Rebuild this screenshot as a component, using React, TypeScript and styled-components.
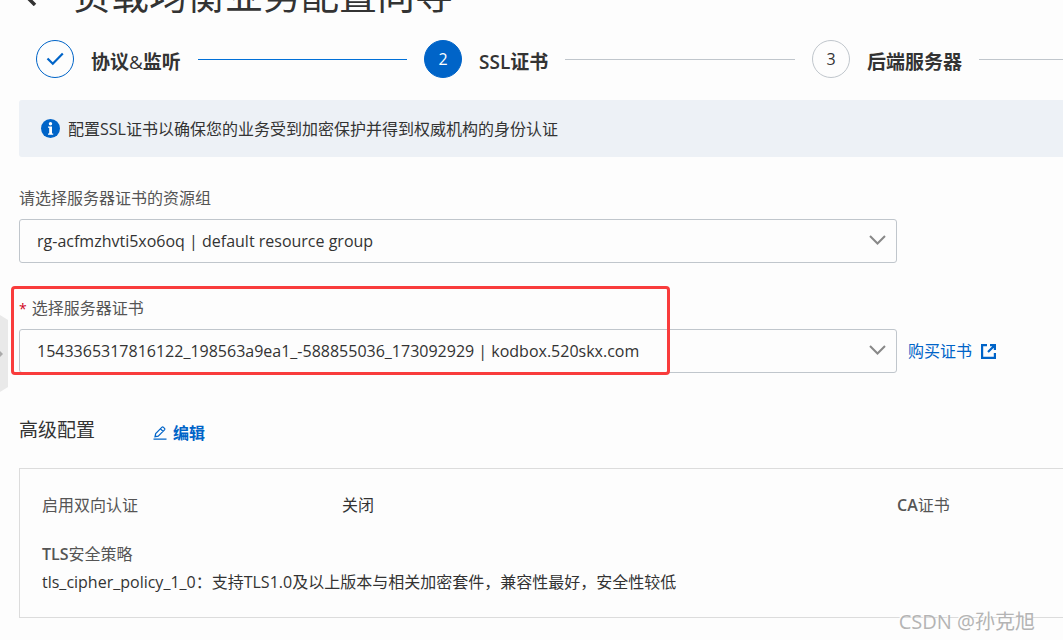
import React from 'react';
import styled, { createGlobalStyle } from 'styled-components';

const GlobalStyle = createGlobalStyle`
  *, *::before, *::after { box-sizing: border-box; }
  body {
    margin: 0;
    background: #fdfdfd;
    color: #333;
    font: 16px/24px "Open Sans", "Noto Sans CJK SC", sans-serif;
  }
  h1, h2, p, dl, dd, ol { margin: 0; padding: 0; }
`;

const Page = styled.main`
  position: relative;
  min-height: 100vh;
  overflow: hidden;
`;

const Header = styled.header`
  display: flex;
  align-items: flex-end;
  gap: 35px;
  height: 20px;
  padding-left: 20px;
`;

const BackButton = styled.button`
  display: flex;
  padding: 0 0 14px;
  border: 0;
  background: none;
  color: #333;
`;

const Title = styled.h1`
  font-size: 38px;
  font-weight: 400;
  line-height: 52px;
  white-space: nowrap;
`;

const Steps = styled.ol`
  display: grid;
  grid-template-columns: 371fr 371fr 251fr;
  column-gap: 17px;
  padding: 20px 0 22px 36px;
  list-style: none;
`;

const StepItem = styled.li`
  display: flex;
  align-items: center;
  gap: 17px;
  min-width: 0;
`;

type StepState = 'done' | 'active' | 'todo';

const StepMark = styled.span<{ $state: StepState }>`
  display: flex;
  flex: none;
  align-items: center;
  justify-content: center;
  width: 38px;
  height: 38px;
  border: 1px solid ${({ $state }) => ($state === 'todo' ? '#c0c6cc' : '#0064c8')};
  border-radius: 50%;
  background: ${({ $state }) => ($state === 'active' ? '#0064c8' : 'transparent')};
  color: ${({ $state }) => ($state === 'active' ? '#fff' : '#333')};
`;

const StepLabel = styled.span`
  padding-top: 6px;
  font-size: 19px;
  font-weight: 700;
  white-space: nowrap;
`;

const Latin = styled.span<{ $weight: number }>`
  font-weight: ${({ $weight }) => $weight};
`;

const StepLine = styled.span<{ $state: StepState }>`
  flex: 1;
  height: 1px;
  background: ${({ $state }) => ($state === 'done' ? '#0070d8' : '#c0c6cc')};
`;

const Content = styled.div`
  padding-left: 19px;
`;

const Notice = styled.p`
  display: flex;
  align-items: center;
  gap: 8px;
  height: 57px;
  padding-left: 22px;
  border-radius: 3px 0 0 3px;
  background: #edf1f6;
`;

const Form = styled.form`
  display: grid;
  grid-template-columns: 878fr 166fr;
  row-gap: 33px;
  align-items: end;
  padding-top: 29px;
`;

const Field = styled.div`
  position: relative;
  grid-column: 1;
`;

const FieldLabel = styled.label`
  display: block;
  height: 33px;
  color: #555;
`;

const Required = styled.span`
  margin-right: 5px;
  color: #d0021b;
  font-size: 14px;
`;

const SelectBox = styled.div`
  position: relative;
`;

const Select = styled.select`
  display: block;
  width: 100%;
  height: 44px;
  padding: 0 40px 0 17px;
  appearance: none;
  border: 1px solid #c0c6cc;
  border-radius: 3px;
  background: transparent;
  color: #333;
  font: inherit;
`;

const Chevron = styled.svg`
  position: absolute;
  top: 15px;
  right: 11px;
  pointer-events: none;
`;

const Highlight = styled.div`
  position: absolute;
  top: -10px;
  bottom: -2px;
  left: -8px;
  width: 75%;
  border: 3px solid #f93c3c;
  border-radius: 4px;
  pointer-events: none;
`;

const BuyLink = styled.a`
  display: flex;
  align-items: center;
  gap: 8px;
  height: 44px;
  padding-left: 11px;
  color: #0064c8;
  text-decoration: none;
`;

const SectionHead = styled.div`
  display: flex;
  align-items: center;
  gap: 58px;
  padding-top: 42px;
`;

const SectionTitle = styled.h2`
  font-size: 19px;
  font-weight: 400;
  line-height: 28px;
`;

const EditButton = styled.button`
  display: flex;
  align-items: center;
  gap: 6px;
  padding: 6px 0 0;
  border: 0;
  background: none;
  color: #0064c8;
  font: inherit;
  font-weight: 700;
`;

const Panel = styled.dl`
  display: grid;
  grid-template-columns: 300fr 555fr 166fr;
  margin-top: 23px;
  padding: 24px 0 23px 22px;
  border: 1px solid #dcdcdc;
  border-right: 0;
`;

const Term = styled.dt`
  color: #555;
`;

const Policy = styled.div`
  grid-column: 1 / -1;
  padding-top: 25px;
`;

const PolicyValue = styled.dd`
  padding-top: 4px;
`;

const Handle = styled.button`
  position: absolute;
  top: 315px;
  left: 0;
  display: flex;
  align-items: center;
  width: 8px;
  height: 77px;
  padding: 0;
  border: 0;
  background: #e9e9e9;
  clip-path: polygon(0 0, 100% 5px, 100% 72px, 0 100%);
`;

const Watermark = styled.div`
  position: absolute;
  right: 28px;
  bottom: 4px;
  color: #b4b4b4;
  font-size: 20px;
  line-height: 28px;
  text-shadow: -1px -1px 0 #fff;
`;

const ChevronIcon = () => (
  <Chevron width="17" height="12" viewBox="0 0 17 12" fill="none" stroke="#888" strokeWidth="2" aria-hidden="true">
    <path d="M1 2l7.500 7.500L16 2" />
  </Chevron>
);

export default function App() {
  return (
    <>
      <GlobalStyle />
      <Page>
        <Header>
          <BackButton type="button" aria-label="返回">
            <svg width="18" height="26" viewBox="0 0 18 26" fill="none" stroke="currentColor" strokeWidth="3.500">
              <path d="M15 1L3 13l12 12" />
            </svg>
          </BackButton>
          <Title>负载均衡业务配置向导</Title>
        </Header>

        <Steps>
          <StepItem>
            <StepMark $state="done">
              <svg width="18" height="14" viewBox="0 0 18 14" fill="none" stroke="#0064c8" strokeWidth="2.200" aria-label="完成">
                <path d="M1.500 6.500l5.300 5.300L16.800 1.500" />
              </svg>
            </StepMark>
            <StepLabel>协议<Latin $weight={400}>&amp;</Latin>监听</StepLabel>
            <StepLine $state="done" />
          </StepItem>
          <StepItem aria-current="step">
            <StepMark $state="active">2</StepMark>
            <StepLabel><Latin $weight={600}>SSL</Latin>证书</StepLabel>
            <StepLine $state="active" />
          </StepItem>
          <StepItem>
            <StepMark $state="todo">3</StepMark>
            <StepLabel>后端服务器</StepLabel>
            <StepLine $state="todo" />
          </StepItem>
        </Steps>

        <Content>
          <Notice>
            <svg width="19" height="19" viewBox="0 0 19 19" aria-hidden="true">
              <circle cx="9.500" cy="9.500" r="9.500" fill="#0064c8" />
              <circle cx="9.500" cy="4.700" r="1.700" fill="#fff" />
              <path d="M7 7.500h4v7h1.200v1.300H7v-1.300h1.200V8.800H7z" fill="#fff" />
            </svg>
            配置SSL证书以确保您的业务受到加密保护并得到权威机构的身份认证
          </Notice>

          <Form>
            <Field>
              <FieldLabel htmlFor="group">请选择服务器证书的资源组</FieldLabel>
              <SelectBox>
                <Select id="group">
                  <option>rg-acfmzhvti5xo6oq | default resource group</option>
                </Select>
                <ChevronIcon />
              </SelectBox>
            </Field>
            <Field>
              <FieldLabel htmlFor="cert"><Required>*</Required>选择服务器证书</FieldLabel>
              <SelectBox>
                <Select id="cert" required>
                  <option>1543365317816122_198563a9ea1_-588855036_173092929 | kodbox.520skx.com</option>
                </Select>
                <ChevronIcon />
              </SelectBox>
              <Highlight />
            </Field>
            <BuyLink href="#buy">
              购买证书
              <svg width="17" height="17" viewBox="0 0 17 17" fill="none" stroke="currentColor" strokeWidth="2.200" aria-hidden="true">
                <path d="M7 2.100H2.100v12.800h12.800V10M10 2.100h4.900V7M14.500 2.500L8 9" />
              </svg>
            </BuyLink>
          </Form>

          <SectionHead>
            <SectionTitle>高级配置</SectionTitle>
            <EditButton type="button">
              <svg width="14" height="14" viewBox="0 0 14 14" fill="none" stroke="currentColor" strokeWidth="1.200" aria-hidden="true">
                <path d="M0.500 13.200h13M2 10.700l.7-3.200 6.300-6.300q.8-.5 1.500.2l1 1q.7.700 0 1.500L5.200 10.200zM7.500 2.800l2.700 2.700" />
              </svg>
              编辑
            </EditButton>
          </SectionHead>

          <Panel>
            <Term>启用双向认证</Term>
            <dd>关闭</dd>
            <Term><Latin $weight={600}>CA</Latin>证书</Term>
            <Policy>
              <Term><Latin $weight={600}>TLS</Latin>安全策略</Term>
              <PolicyValue>tls_cipher_policy_1_0：支持TLS1.0及以上版本与相关加密套件，兼容性最好，安全性较低</PolicyValue>
            </Policy>
          </Panel>
        </Content>

        <Handle type="button" aria-label="展开侧栏">
          <svg width="3" height="6" viewBox="0 0 3 6" fill="#aaa"><path d="M0 0l3 3-3 3z" /></svg>
        </Handle>
        <Watermark>CSDN @孙克旭</Watermark>
      </Page>
    </>
  );
}
